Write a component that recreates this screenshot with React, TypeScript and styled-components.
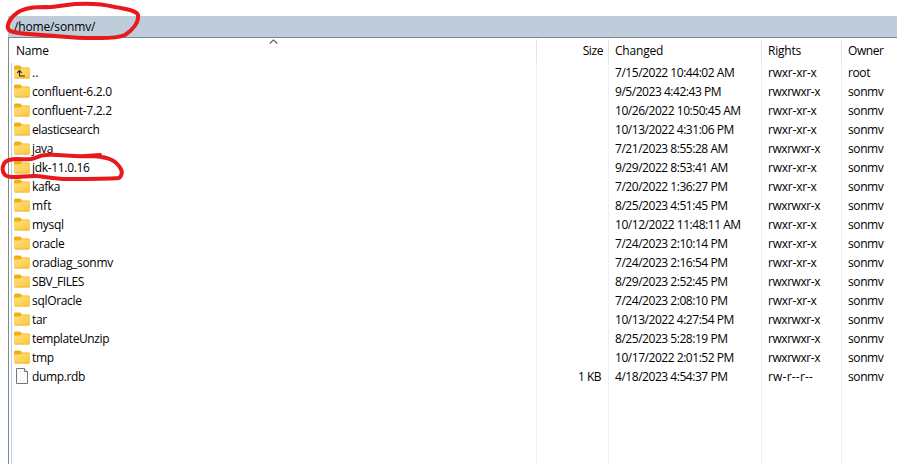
import React from "react";
import styled, { createGlobalStyle } from "styled-components";

const GlobalStyle = createGlobalStyle`
  * { box-sizing: border-box; }
  body { margin: 0; background: #fff; overflow: hidden; }
`;

const Window = styled.div`
  position: relative;
  width: 897px;
  height: 464px;
  padding: 16px 0 0 8px;
  overflow: hidden;
  background: #fff;
  color: #000;
  font: 12px/19px "Open Sans", "Noto Sans", sans-serif;
`;

const PathBar = styled.div`
  height: 21px;
  padding: 1px 0 0 6px;
  background: #bfcddb;
  letter-spacing: -0.15px;
`;

const Panel = styled.div`
  height: 427px;
  border-top: 1px solid #7b8794;
  border-left: 1px solid #828790;
`;

const columns = "527px 72px 153px 80px 1fr";

const Header = styled.div`
  display: grid;
  grid-template-columns: ${columns};
  height: 25px;
  padding-top: 1px;
`;

const HeaderCell = styled.div<{ $right?: boolean; $first?: boolean; $spacing?: number }>`
  position: relative;
  padding: ${(p) => (p.$right ? "2px 5px 0 0" : p.$first ? "2px 0 0 7px" : "2px 0 0 6px")};
  text-align: ${(p) => (p.$right ? "right" : "left")};
  border-left: ${(p) => (p.$first ? "none" : "1px solid #e5e5e5")};
  letter-spacing: ${(p) => p.$spacing ?? -0.2}px;
`;

const SortMark = styled.svg`
  position: absolute;
  left: 260px;
  top: 0;
`;

const Body = styled.div`
  display: grid;
  grid-template-columns: ${columns};
  height: 401px;
`;

const Column = styled.div<{ $right?: boolean; $spacing?: number }>`
  padding: ${(p) => (p.$right ? "0 7px 0 0" : "0 0 0 6px")};
  text-align: ${(p) => (p.$right ? "right" : "left")};
  border-left: 1px solid #e9f1fb;
  letter-spacing: ${(p) => p.$spacing ?? 0}px;
  white-space: nowrap;
`;

const NameColumn = styled(Column)`
  margin-left: 2px;
  padding-left: 2px;
  border-left-color: #b9d1ee;
`;

const NameCell = styled.div<{ $spacing?: number }>`
  display: flex;
  height: 19px;
  letter-spacing: ${(p) => p.$spacing ?? -0.32}px;
`;

const Cell = styled.div<{ $spacing?: number }>`
  height: 19px;
  letter-spacing: ${(p) => (p.$spacing === undefined ? "inherit" : `${p.$spacing}px`)};
`;

const IconSlot = styled.span`
  display: block;
  width: 18px;
  height: 19px;
  flex: none;
`;

const Annotation = styled.svg`
  position: absolute;
  left: 0;
  top: 0;
  pointer-events: none;
`;

const FolderIcon = ({ up }: { up?: boolean }) => (
  <svg width="18" height="19" viewBox="0 0 18 19">
    <path d="M0 4q0-1.500 1.500-1.500h4q.8 0 1.300.6L8 4.500h6.500q1.500 0 1.500 1.500v7H0z" fill="#f2af0f" />
    <path d="M0 6.500h5.700L7.800 5.200h6.700Q16 5.200 16 6.500v7.500q0 1.500-1.500 1.500h-13Q0 15.500 0 14z" fill="url(#folderFace)" />
    <path d="M.8 15.100h14.400" stroke="#e8ad2c" strokeWidth=".7" />
    {up && (
      <path
        d="M5.500 8.200V13H10.800M3.200 9.900L5.500 7.600L7.800 9.900"
        fill="none"
        stroke="#2c2818"
        strokeWidth="1.100"
      />
    )}
  </svg>
);

const FileIcon = () => (
  <svg width="18" height="19" viewBox="0 0 18 19">
    <path d="M2.500 1.500h8l3 3v12h-11z" fill="#fafafa" stroke="#777" />
    <path d="M10.500 1.500v3h3" fill="#fff" stroke="#777" />
  </svg>
);

type Entry = { name: string; changed: string; rights: string; spacing?: number };

const rx = "rwxr-xr-x";
const rwx = "rwxrwxr-x";
const entries: Entry[] = [
  { name: "..", changed: "7/15/2022 10:44:02 AM", rights: rx, spacing: 0 },
  { name: "confluent-6.2.0", changed: "9/5/2023 4:42:43 PM", rights: rwx, spacing: -0.27 },
  { name: "confluent-7.2.2", changed: "10/26/2022 10:50:45 AM", rights: rx, spacing: -0.27 },
  { name: "elasticsearch", changed: "10/13/2022 4:31:06 PM", rights: rx, spacing: -0.38 },
  { name: "java", changed: "7/21/2023 8:55:28 AM", rights: rwx },
  { name: "jdk-11.0.16", changed: "9/29/2022 8:53:41 AM", rights: rx },
  { name: "kafka", changed: "7/20/2022 1:36:27 PM", rights: rx, spacing: -0.4 },
  { name: "mft", changed: "8/25/2023 4:51:45 PM", rights: rwx, spacing: 0 },
  { name: "mysql", changed: "10/12/2022 11:48:11 AM", rights: rx },
  { name: "oracle", changed: "7/24/2023 2:10:14 PM", rights: rx },
  { name: "oradiag_sonmv", changed: "7/24/2023 2:16:54 PM", rights: rx },
  { name: "SBV_FILES", changed: "8/29/2023 2:52:45 PM", rights: rwx, spacing: -0.44 },
  { name: "sqlOracle", changed: "7/24/2023 2:08:10 PM", rights: rx },
  { name: "tar", changed: "10/13/2022 4:27:54 PM", rights: rwx },
  { name: "templateUnzip", changed: "8/25/2023 5:28:19 PM", rights: rwx, spacing: -0.4 },
  { name: "tmp", changed: "10/17/2022 2:01:52 PM", rights: rwx },
  { name: "dump.rdb", changed: "4/18/2023 4:54:37 PM", rights: "rw-r--r--", spacing: -0.37 },
];

const rightsSpacing: Record<string, number> = { [rx]: -0.22, [rwx]: -0.45, "rw-r--r--": 0.2 };

export default function App() {
  return (
    <Window>
      <GlobalStyle />
      <PathBar>/home/sonmv/</PathBar>
      <Panel>
        <Header>
          <HeaderCell $first>
            Name
            <SortMark width="9" height="6" viewBox="0 0 9 6">
              <path d="M.8 4.500L4.500.9L8.200 4.500" fill="none" stroke="#555" strokeWidth="1.100" />
            </SortMark>
          </HeaderCell>
          <HeaderCell $right $spacing={-0.4}>Size</HeaderCell>
          <HeaderCell>Changed</HeaderCell>
          <HeaderCell>Rights</HeaderCell>
          <HeaderCell $spacing={-0.45}>Owner</HeaderCell>
        </Header>
        <Body>
          <NameColumn>
            {entries.map((e) => (
              <NameCell key={e.name} $spacing={e.spacing}>
                <IconSlot>{e.name === "dump.rdb" ? <FileIcon /> : <FolderIcon up={e.name === ".."} />}</IconSlot>
                {e.name}
              </NameCell>
            ))}
          </NameColumn>
          <Column $right $spacing={-0.5}>
            {entries.map((e) => (
              <Cell key={e.name}>{e.name === "dump.rdb" ? "1 KB" : ""}</Cell>
            ))}
          </Column>
          <Column $spacing={-0.46}>
            {entries.map((e) => (
              <Cell key={e.name}>{e.changed}</Cell>
            ))}
          </Column>
          <Column>
            {entries.map((e) => (
              <Cell key={e.name} $spacing={rightsSpacing[e.rights]}>{e.rights}</Cell>
            ))}
          </Column>
          <Column $spacing={-0.4}>
            {entries.map((e, i) => (
              <Cell key={e.name}>{i === 0 ? "root" : "sonmv"}</Cell>
            ))}
          </Column>
        </Body>
      </Panel>
      <Annotation width="897" height="464" viewBox="0 0 897 464">
        <defs>
          <linearGradient id="folderFace" x1="0" y1="0" x2="1" y2="1">
            <stop offset="0" stopColor="#ffe07e" />
            <stop offset="1" stopColor="#fbc73c" />
          </linearGradient>
        </defs>
        <g fill="none" stroke="#e8191c" strokeWidth="4" strokeLinecap="round" strokeLinejoin="round">
          <path d="M45 7C54 8 62 5 75 4C90 3 103 4 115 7C127 9 137 11 138 15C139 22 133 30 125 35C115 39 104 38 92 38C75 38 58 36 42 35C26 34 12 33 9 30C5 26 11 16 20 11C29 7 37 7 47 7" />
          <path d="M86 156C98 156 109 157 115 162C122 168 124 174 119 178C107 179 84 179 67 179C53 179 43 176 35 176C23 176 10 179 5 175C1 171 2 162 9 160C17 158 23 160 31 159C37 158 39 155 46 155C59 154 73 157 86 156L100 155" />
        </g>
      </Annotation>
    </Window>
  );
}
